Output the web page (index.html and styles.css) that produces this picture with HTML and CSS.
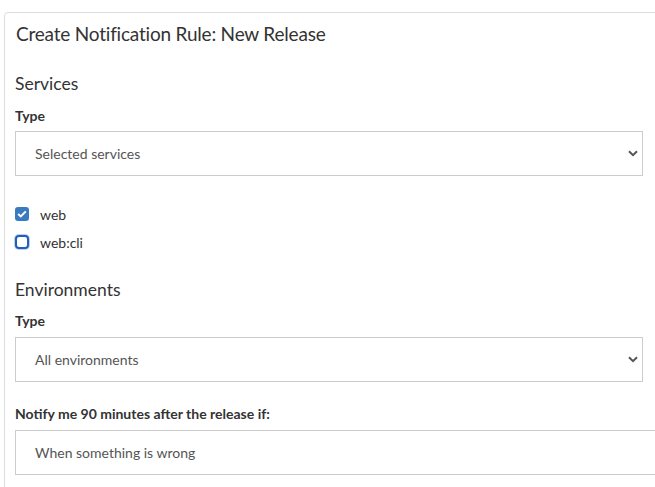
FILE: index.html
```html
<!DOCTYPE html>
<html>
<head>
<meta charset="utf-8">
<link rel="stylesheet" href="styles.css">
</head>
<body>
<div class="card">
  <h1 class="title">Create Notification Rule: New Release</h1>
  <h2 class="section">Services</h2>
  <div class="label">Type</div>
  <div class="select narrow">
    <span>Selected services</span>
    <svg class="chev" width="10" height="7" viewBox="0 0 10 7"><path d="M1 1.2 L5 5.2 L9 1.2" fill="none" stroke="#555" stroke-width="2"/></svg>
  </div>
  <div class="checks">
    <label class="check"><span class="box on"><svg width="10" height="8" viewBox="0 0 10 8"><path d="M1.2 4 L3.8 6.4 L8.8 1.4" fill="none" stroke="#fff" stroke-width="2"/></svg></span>web</label>
    <label class="check"><span class="box off"></span>web:cli</label>
  </div>
  <h2 class="section env">Environments</h2>
  <div class="label">Type</div>
  <div class="select narrow">
    <span>All environments</span>
    <svg class="chev" width="10" height="7" viewBox="0 0 10 7"><path d="M1 1.2 L5 5.2 L9 1.2" fill="none" stroke="#555" stroke-width="2"/></svg>
  </div>
  <div class="label notify">Notify me 90 minutes after the release if:</div>
  <div class="select wide">
    <span>When something is wrong</span>
  </div>
</div>
</body>
</html>
```
FILE: styles.css
```css
html, body {
  margin: 0;
  padding: 0;
  overflow: hidden;
  background: #fff;
}
body {
  height: 487px;
  padding: 12px 0 0 4px;
  box-sizing: border-box;
  font-family: Lato, "Open Sans", sans-serif;
  color: #333;
}
.card {
  width: 680px;
  height: 490px;
  border: 1px solid #ddd;
  border-radius: 4px;
  padding: 9px 10px 0 10px;
  box-sizing: border-box;
}
.title {
  margin: 0 0 0 1px;
  font-size: 19px;
  letter-spacing: -0.2px;
  font-weight: 400;
  line-height: 24px;
  height: 24px;
  color: #333;
}
.section {
  margin: 27px 0 0 0;
  font-size: 17.5px;
  font-weight: 400;
  line-height: 22px;
  height: 22px;
}
.section.env { margin-top: 27px; }
.label {
  margin-top: 12px;
  font-size: 14px;
  font-weight: 700;
  line-height: 18px;
  height: 18px;
}
.section.env + .label { margin-top: 11px; }
.label.notify { margin-top: 23px; }
.select {
  margin-top: 6px;
  height: 45px;
  border: 1px solid #ccc;
  box-sizing: border-box;
  display: flex;
  align-items: center;
  justify-content: space-between;
  padding: 0 4px 0 19px;
  font-size: 14px;
  color: #555;
}
.label + .select { margin-top: 6px; }
.section.env + .label + .select,
.notify + .select { margin-top: 7px; }
.narrow { width: 628px; }
.wide { width: 650px; }
.chev { display: block; }
.checks {
  margin-top: 28px;
  display: flex;
  flex-direction: column;
  gap: 8px;
}
.check {
  display: flex;
  align-items: center;
  height: 20px;
  font-size: 14px;
  color: #333;
  gap: 11px;
}
.box {
  width: 14px;
  height: 14px;
  box-sizing: border-box;
  border-radius: 3px;
  display: flex;
  align-items: center;
  justify-content: center;
}
.box.on {
  background: #3a7bbf;
}
.box.off {
  background: #fff;
  border: 2px solid #1a5fcc;
  box-shadow: 0 0 0 1px #ccc;
  border-radius: 4px;
}
```
